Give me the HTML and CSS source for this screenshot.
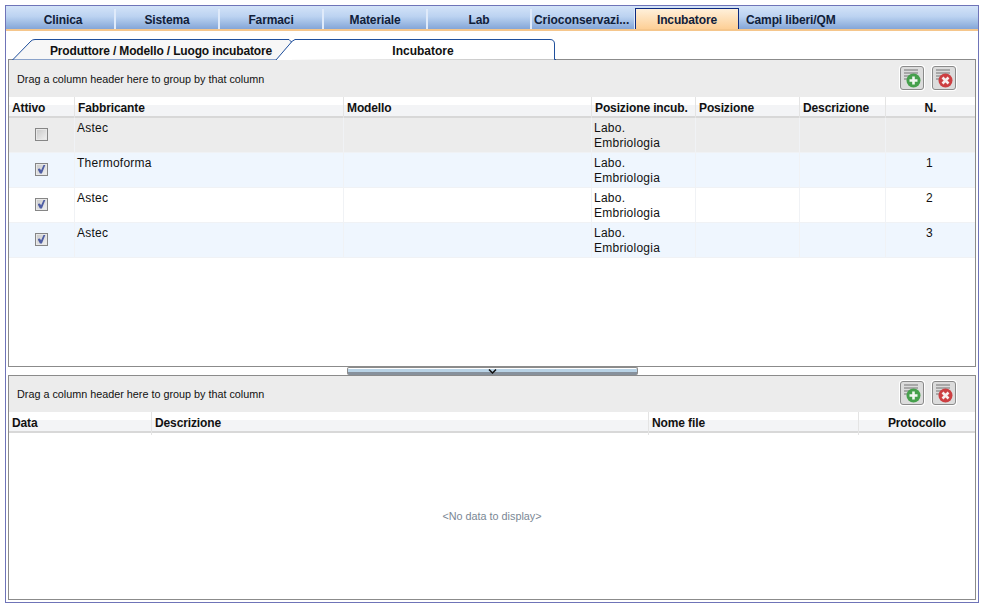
FILE: index.html
```html
<!DOCTYPE html>
<html lang="en">
<head>
    <meta charset="UTF-8">
    <title>Incubatore</title>
    <link rel="stylesheet" href="styles.css">
</head>
<body>
    <div class="frame">
        <nav class="main-tabs">
            <a class="main-tab">Clinica</a>
            <a class="main-tab">Sistema</a>
            <a class="main-tab">Farmaci</a>
            <a class="main-tab">Materiale</a>
            <a class="main-tab">Lab</a>
            <a class="main-tab long">Crioconservazi...</a>
            <a class="main-tab active">Incubatore</a>
            <a class="main-tab last">Campi liberi/QM</a>
        </nav>

        <div class="content">
            <div class="sub-tabs">
                <div class="sub-tab first">
                    <svg class="tab-shape" width="280" height="21" viewBox="0 0 280 21">
                        <path d="M0.5 21 L19 2 Q20.5 0.5 23 0.5 L277 0.5 L279.5 3 L264 21 Z" fill="#f7f7f7" stroke="#1f4f9c"/>
                    </svg>
                    <span class="sub-label">Produttore / Modello / Luogo incubatore</span>
                </div>
                <div class="sub-tab second">
                    <svg class="tab-shape" width="281" height="21" viewBox="0 0 281 21">
                        <path d="M0 21 L16 3 L20 0.5 L275 0.5 Q279.5 0.5 279.5 5 L279.5 20.5 L281 20.5" fill="#fff" stroke="#1f4f9c"/>
                    </svg>
                    <span class="sub-label">Incubatore</span>
                </div>
            </div>

            <section class="panel top-panel">
                <div class="group-bar">
                    <span>Drag a column header here to group by that column</span>
                    <div class="bar-buttons">
                        <button class="icon-btn">
                            <svg width="22" height="22" viewBox="0 0 22 22">
                                <path d="M3 3h14M3 6h14M3 9h9M3 12h6" stroke="#a8a8a8" stroke-width="2"/>
                                <circle cx="12.5" cy="13.5" r="7" fill="#46a04c"/>
                                <path d="M12.5 9.5v8M8.5 13.5h8" stroke="#f2f7f2" stroke-width="2.6"/>
                            </svg>
                        </button>
                        <button class="icon-btn">
                            <svg width="22" height="22" viewBox="0 0 22 22">
                                <path d="M3 3h14M3 6h14M3 9h9M3 12h6" stroke="#a8a8a8" stroke-width="2"/>
                                <circle cx="12.5" cy="13.5" r="7" fill="#cc3f42"/>
                                <path d="M9.5 10.5l6 6M15.5 10.5l-6 6" stroke="#f7eeee" stroke-width="2.6"/>
                            </svg>
                        </button>
                    </div>
                </div>
                <div class="grid-head cols-top">
                    <div>Attivo</div>
                    <div>Fabbricante</div>
                    <div>Modello</div>
                    <div>Posizione incub.</div>
                    <div>Posizione</div>
                    <div>Descrizione</div>
                    <div class="center">N.</div>
                </div>
                <div class="grid-row cols-top row-off">
                    <div class="check-cell"><span class="check"></span></div>
                    <div>Astec</div>
                    <div></div>
                    <div>Labo.<br>Embriologia</div>
                    <div></div>
                    <div></div>
                    <div class="center"></div>
                </div>
                <div class="grid-row cols-top row-alt">
                    <div class="check-cell"><span class="check on"></span></div>
                    <div>Thermoforma</div>
                    <div></div>
                    <div>Labo.<br>Embriologia</div>
                    <div></div>
                    <div></div>
                    <div class="center">1</div>
                </div>
                <div class="grid-row cols-top">
                    <div class="check-cell"><span class="check on"></span></div>
                    <div>Astec</div>
                    <div></div>
                    <div>Labo.<br>Embriologia</div>
                    <div></div>
                    <div></div>
                    <div class="center">2</div>
                </div>
                <div class="grid-row cols-top row-alt">
                    <div class="check-cell"><span class="check on"></span></div>
                    <div>Astec</div>
                    <div></div>
                    <div>Labo.<br>Embriologia</div>
                    <div></div>
                    <div></div>
                    <div class="center">3</div>
                </div>
            </section>

            <div class="splitter">
                <div class="split-handle">
                    <svg width="9" height="5" viewBox="0 0 9 5">
                        <path d="M1 0.5 L4.5 4 L8 0.5" fill="none" stroke="#111" stroke-width="1.5"/>
                    </svg>
                </div>
            </div>

            <section class="panel bottom-panel">
                <div class="group-bar">
                    <span>Drag a column header here to group by that column</span>
                    <div class="bar-buttons">
                        <button class="icon-btn">
                            <svg width="22" height="22" viewBox="0 0 22 22">
                                <path d="M3 3h14M3 6h14M3 9h9M3 12h6" stroke="#a8a8a8" stroke-width="2"/>
                                <circle cx="12.5" cy="13.5" r="7" fill="#46a04c"/>
                                <path d="M12.5 9.5v8M8.5 13.5h8" stroke="#f2f7f2" stroke-width="2.6"/>
                            </svg>
                        </button>
                        <button class="icon-btn">
                            <svg width="22" height="22" viewBox="0 0 22 22">
                                <path d="M3 3h14M3 6h14M3 9h9M3 12h6" stroke="#a8a8a8" stroke-width="2"/>
                                <circle cx="12.5" cy="13.5" r="7" fill="#cc3f42"/>
                                <path d="M9.5 10.5l6 6M15.5 10.5l-6 6" stroke="#f7eeee" stroke-width="2.6"/>
                            </svg>
                        </button>
                    </div>
                </div>
                <div class="grid-head cols-bottom">
                    <div>Data</div>
                    <div>Descrizione</div>
                    <div>Nome file</div>
                    <div class="center">Protocollo</div>
                </div>
                <div class="no-data">&lt;No data to display&gt;</div>
            </section>
        </div>
    </div>
</body>
</html>
```

FILE: styles.css
```css
* {
    margin: 0;
    padding: 0;
    box-sizing: border-box;
}

body {
    width: 983px;
    height: 607px;
    padding: 5px 4px 4px 5px;
    font-family: "Liberation Sans", Arial, sans-serif;
    font-size: 12px;
    color: #111;
    background-color: #fff;
    overflow: hidden;
}

.frame {
    height: 598px;
    border: 1px solid #6f74b8;
    display: flex;
    flex-direction: column;
}

/* top menu */
.main-tabs {
    height: 25px;
    flex: none;
    padding: 3px 0 0 6px;
    display: flex;
    background: linear-gradient(to bottom, #d3e3f8, #bcd3f1 45%, #84a6d8);
    border-bottom: 2px solid #f5c68c;
}

.main-tab {
    width: 104px;
    height: 20px;
    line-height: 22px;
    text-align: center;
    font-weight: bold;
    letter-spacing: -0.12px;
    color: #10203a;
    border-right: 2px solid #dfeafa;
    white-space: nowrap;
}

.main-tab.long {
    padding-left: 2px;
    text-align: left;
    letter-spacing: -0.05px;
}

.main-tab.active {
    height: 21px;
    margin-top: -1px;
    margin-left: -1px;
    line-height: 23px;
    background: linear-gradient(to bottom, #fff0da, #fdcf96);
    border: 1px solid #0d2a80;
    border-bottom: none;
}

.main-tab.last {
    width: auto;
    padding-left: 7px;
    border-right: none;
}

.content {
    flex: 1;
    min-height: 0;
    padding: 8px 2px 2px 2px;
    display: flex;
    flex-direction: column;
}

/* sub tabs */
.sub-tabs {
    height: 21px;
    flex: none;
    display: flex;
    border-bottom: 1px solid #8b8b8b;
}

.sub-tab {
    position: relative;
    width: 280px;
    height: 21px;
    text-align: center;
    font-weight: bold;
    line-height: 25px;
}

.sub-tab.first {
    margin-left: 4px;
    padding-left: 18px;
    letter-spacing: -0.15px;
    z-index: 1;
}

.sub-tab.second {
    margin-left: -17px;
    padding-left: 16px;
}

.tab-shape {
    position: absolute;
    left: 0;
    top: 0;
}

.sub-label {
    position: relative;
}

/* grids */
.panel {
    display: flex;
    flex-direction: column;
    border: 1px solid #8b8b8b;
    border-top: none;
    background-color: #fff;
}

.top-panel {
    height: 307px;
    flex: none;
}

.bottom-panel {
    flex: 1;
    min-height: 0;
    border-top: 1px solid #8b8b8b;
}

.group-bar {
    height: 37px;
    flex: none;
    padding: 0 19px 0 8px;
    display: flex;
    align-items: center;
    justify-content: space-between;
    background-color: #ececec;
    font-size: 10.8px;
}

.bottom-panel .group-bar {
    height: 36px;
}

.bar-buttons {
    display: flex;
    gap: 8px;
    margin-bottom: 2px;
}

.icon-btn {
    width: 24px;
    height: 24px;
    border: 1px solid #8a8a8a;
    border-radius: 3px;
    background-color: #dcdcdc;
    display: flex;
    align-items: center;
    justify-content: center;
    box-shadow: 0 0 0 1px #fff;
}

.grid-head,
.grid-row {
    display: grid;
    flex: none;
}

.cols-top {
    grid-template-columns: 66px 269px 248px 104px 104px 86px 1fr;
}

.cols-bottom {
    grid-template-columns: 143px 497px 210px 1fr;
}

.grid-head {
    height: 21px;
    font-weight: bold;
    line-height: 23px;
    letter-spacing: -0.12px;
    background: linear-gradient(to bottom, #fff 40%, #f3f4f6 40%);
    border-bottom: 2px solid #d8d8d8;
}

.grid-head > div {
    padding-left: 3px;
    border-right: 1px solid #e4e4e4;
}

.grid-head > div:last-child {
    border-right: none;
}

.grid-row {
    height: 35px;
    line-height: 15px;
    letter-spacing: 0.25px;
    border-bottom: 1px solid #f0f2f5;
}

.grid-row > div {
    padding: 3px 0 0 2px;
    border-right: 1px solid #f0f2f5;
}

.grid-row > div:last-child {
    border-right: none;
}

.row-off {
    background-color: #ececec;
}

.row-alt {
    background-color: #eff6fe;
}

.grid-head > .center {
    padding-left: 0;
}

.grid-row > .center {
    padding-left: 0;
    padding-right: 2px;
    text-align: center;
}

.center {
    text-align: center;
}

.grid-row > .check-cell {
    padding: 0 1px 2px 0;
    display: flex;
    align-items: center;
    justify-content: center;
}

.check {
    position: relative;
    width: 13px;
    height: 13px;
    border: 1px solid #868686;
    box-shadow: inset 0 0 0 1px #e8e8e8;
    background: linear-gradient(135deg, #c8c8c8, #f2f2f2);
}

.check.on::after {
    content: "";
    position: absolute;
    left: 2px;
    top: 1px;
    width: 8px;
    height: 9px;
    background-color: #4f5ea4;
    clip-path: polygon(0 50%, 30% 45%, 45% 65%, 78% 0, 100% 0, 55% 100%, 30% 100%);
}

.splitter {
    height: 8px;
    flex: none;
    display: flex;
    justify-content: center;
}

.split-handle {
    width: 291px;
    height: 8px;
    margin-left: 1px;
    padding-top: 1px;
    display: flex;
    justify-content: center;
    background: linear-gradient(to bottom, #fff 15%, #b9d3e6 15%, #b9d3e6 55%, #87919c 55%);
    border: 1px solid #8b8b8b;
    border-bottom: none;
    border-radius: 2px;
}

.no-data {
    flex: 1;
    display: flex;
    align-items: center;
    justify-content: center;
    font-size: 10.8px;
    color: #7a8794;
}
```
